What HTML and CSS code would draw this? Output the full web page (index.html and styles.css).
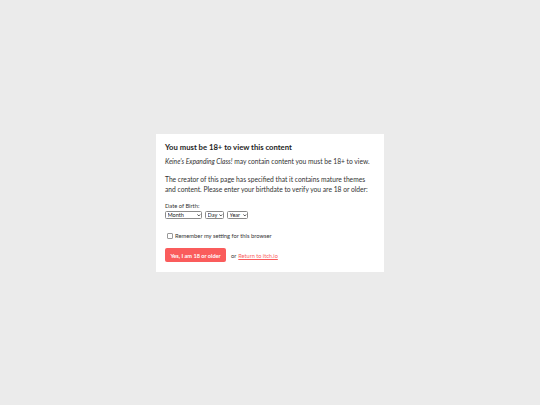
FILE: index.html
```html
<!DOCTYPE html>
<html>
<head>
<meta charset="utf-8">
<link rel="stylesheet" href="styles.css">
</head>
<body>
<div class="page">
  <div class="card">
    <h2 class="title">You must be 18+ to view this content</h2>
    <p class="intro"><em>Keine's Expanding Class!</em> may contain content you must be 18+ to view.</p>
    <p class="desc">The creator of this page has specified that it contains mature themes and content. Please enter your birthdate to verify you are 18 or older:</p>
    <div class="dob">
      <div class="label">Date of Birth:</div>
      <div class="selects">
        <span class="selwrap month">
          <select class="sel"><option>Month</option></select>
          <svg class="chev" viewBox="0 0 6 4" width="3.6" height="2.6"><path d="M0.8 0.8 L3 3 L5.2 0.8" fill="none" stroke="#111" stroke-width="1.4"/></svg>
        </span>
        <span class="selwrap day">
          <select class="sel"><option>Day</option></select>
          <svg class="chev" viewBox="0 0 6 4" width="3.6" height="2.6"><path d="M0.8 0.8 L3 3 L5.2 0.8" fill="none" stroke="#111" stroke-width="1.4"/></svg>
        </span>
        <span class="selwrap year">
          <select class="sel"><option>Year</option></select>
          <svg class="chev" viewBox="0 0 6 4" width="3.6" height="2.6"><path d="M0.8 0.8 L3 3 L5.2 0.8" fill="none" stroke="#111" stroke-width="1.4"/></svg>
        </span>
      </div>
    </div>
    <label class="remember"><input type="checkbox" class="check"><span>Remember my setting for this browser</span></label>
    <div class="actions">
      <button class="btn">Yes, I am 18 or older</button>
      <span class="or">or</span>
      <a class="link" href="#">Return to itch.io</a>
    </div>
  </div>
</div>
</body>
</html>
```

FILE: styles.css
```css
* { box-sizing: border-box; }
html, body { margin: 0; padding: 0; }
body {
  background: #ebebeb;
  font-family: Lato, "Liberation Sans", sans-serif;
  color: #222;
}
.page {
  height: 405px;
  display: flex;
  align-items: center;
  justify-content: center;
}
.card {
  width: 228px;
  height: 138px;
  background: #fff;
  padding: 8px 9px;
}
.title {
  margin: 0 0 4px;
  font-size: 7.7px;
  font-weight: 700;
  line-height: 10px;
  color: #1e1e1e;
}
.intro, .desc {
  margin: 0;
  font-size: 6.7px;
  line-height: 10px;
  color: #333;
}
.intro { margin-bottom: 8px; }
.desc { margin-bottom: 8.5px; }
.label {
  font-size: 5.8px;
  line-height: 7px;
  color: #333;
}
.selects {
  display: flex;
  gap: 3px;
  margin-top: 2px;
}
.selwrap {
  position: relative;
  display: block;
  height: 8px;
}
.sel {
  display: block;
  width: 100%;
  height: 8px;
  -webkit-appearance: none;
  appearance: none;
  font-family: Lato, "Liberation Sans", sans-serif;
  font-size: 5.6px;
  line-height: 6px;
  padding: 0 0 0 1.5px;
  border: 1px solid #8a8a8a;
  border-radius: 1.5px;
  background: #fff;
  color: #222;
  outline: none;
}
.chev {
  position: absolute;
  right: 1.5px;
  top: 2.7px;
  pointer-events: none;
}
.month { width: 37px; }
.day { width: 19px; }
.year { width: 21px; }
.remember {
  display: flex;
  align-items: center;
  gap: 2px;
  margin-top: 13px;
  padding-left: 2px;
  font-size: 5.8px;
  line-height: 7px;
  color: #333;
}
.check {
  -webkit-appearance: none;
  appearance: none;
  width: 6px;
  height: 6px;
  margin: 0;
  border: 0.8px solid #999;
  border-radius: 1px;
  background: #fff;
}
.actions {
  display: flex;
  align-items: center;
  margin-top: 9px;
}
.btn {
  width: 61px;
  height: 14px;
  background: #fa5c5c;
  border: none;
  border-radius: 2px;
  color: #fff;
  font-family: Lato, "Liberation Sans", sans-serif;
  font-size: 5.6px;
  font-weight: 700;
  padding: 0;
}
.or {
  margin-left: 5px;
  font-size: 5.7px;
  color: #333;
}
.link {
  margin-left: 2px;
  font-size: 5.6px;
  color: #fa5c5c;
}
```
